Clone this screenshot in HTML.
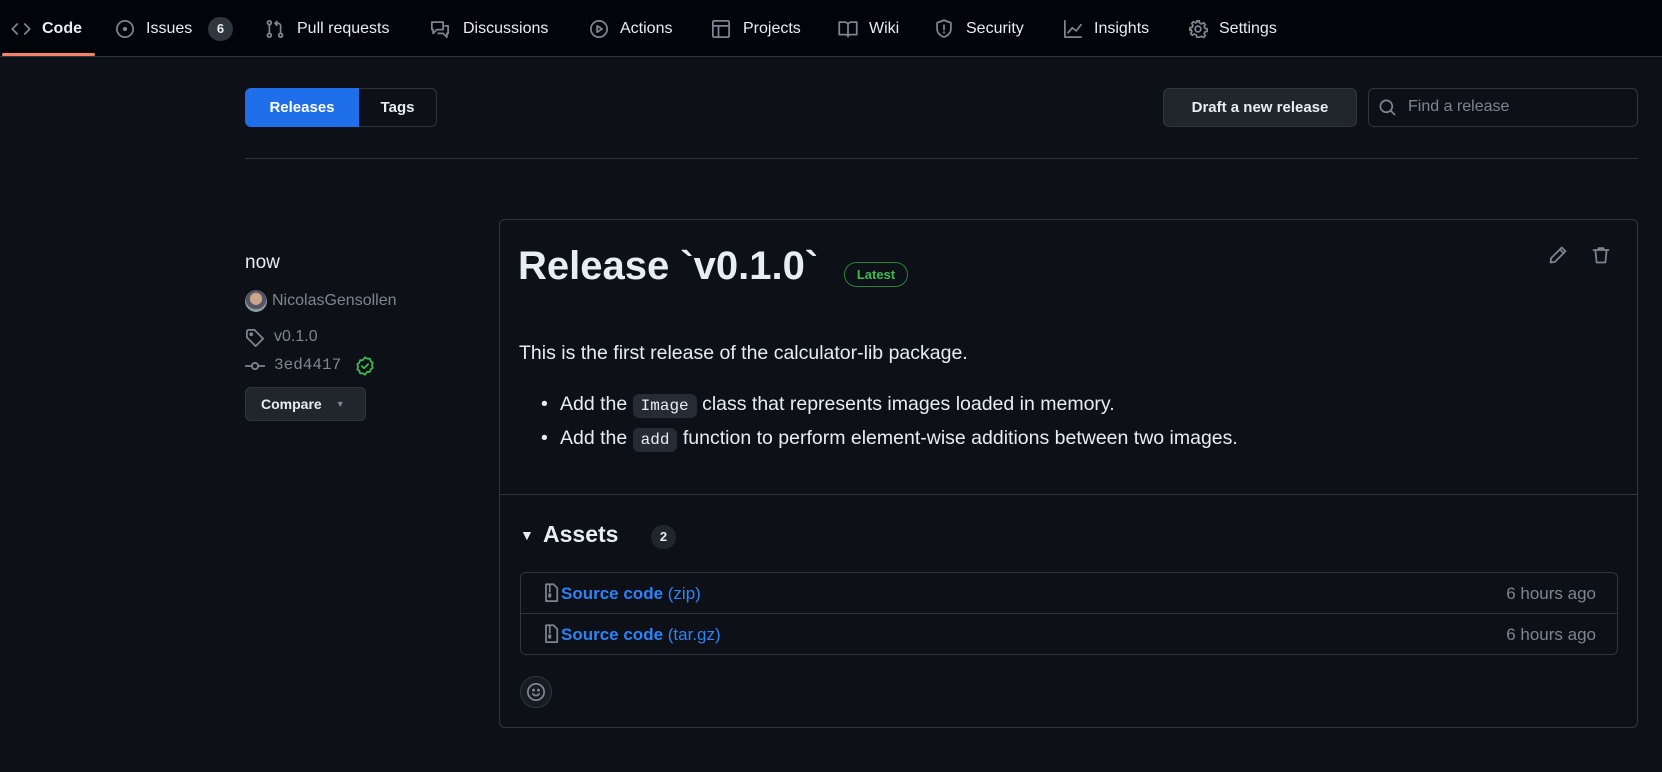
<!DOCTYPE html>
<html><head><meta charset="utf-8"><style>
*{box-sizing:border-box;margin:0;padding:0}
body{width:1662px;height:772px;background:#0d1117;color:#e6edf3;font-family:"Liberation Sans",sans-serif;position:relative;overflow:hidden}
.a{position:absolute}
.nav{left:0;top:0;width:1662px;height:57px;background:#010409;border-bottom:1px solid #30363d}
.ni{position:absolute;top:19px;font-size:16px;line-height:20px;color:#e6edf3;white-space:nowrap}
.ic{position:absolute;top:19px}
svg{fill:none;stroke:#7d8590;stroke-width:1.4;stroke-linecap:round;stroke-linejoin:round}
.btn{border:1px solid #30363d;border-radius:6px;background:#21262d;font-weight:bold;font-size:15px;display:flex;align-items:center;justify-content:center}
.m{color:#7d8590}
code{font-family:"Liberation Mono",monospace;font-size:16px;background:#262c36;border-radius:6px;padding:3px 8px}
.lnk{color:#2f81f7;font-size:17px;font-weight:bold}
.p{font-size:19.5px;white-space:nowrap}
</style></head><body>
<div class="a nav">
<div class="a" style="left:2px;top:53px;width:93px;height:3px;background:#f78166;border-radius:2px"></div>
<svg class="ic" style="left:11px" width="20" height="20" viewBox="0 0 16 16"><path d="M5 4L1 8l4 4M11 4l4 4-4 4"/></svg>
<div class="ni" style="left:42px;font-weight:bold">Code</div>
<svg class="ic" style="left:115px" width="20" height="20" viewBox="0 0 16 16"><circle cx="8" cy="8" r="6.5"/><circle cx="8" cy="8" r="1" fill="#7d8590"/></svg>
<div class="ni" style="left:146px">Issues</div>
<div class="a" style="left:208px;top:17px;width:25px;height:24px;border-radius:12px;background:#30363d;font-size:13px;font-weight:bold;text-align:center;line-height:24px">6</div>
<svg class="ic" style="left:265px" width="20" height="20" viewBox="0 0 16 16"><circle cx="3.5" cy="3" r="1.5"/><circle cx="3.5" cy="13" r="1.5"/><circle cx="12.5" cy="13" r="1.5"/><path d="M3.5 4.5v7M12.5 11.5V5.5a2 2 0 0 0-2-2H8M9.5 2L8 3.5 9.5 5"/></svg>
<div class="ni" style="left:297px">Pull requests</div>
<svg class="ic" style="left:430px" width="20" height="20" viewBox="0 0 16 16"><path d="M1.5 2.5h9v6h-5l-3 3v-3h-1zM12 5.5h2.5v6h-1v3l-3-3h-4"/></svg>
<div class="ni" style="left:463px">Discussions</div>
<svg class="ic" style="left:589px" width="20" height="20" viewBox="0 0 16 16"><circle cx="8" cy="8" r="6.5"/><path d="M6.5 5.5v5l4-2.5z"/></svg>
<div class="ni" style="left:620px">Actions</div>
<svg class="ic" style="left:711px" width="20" height="20" viewBox="0 0 16 16"><rect x="1.5" y="1.5" width="13" height="13" rx="1"/><path d="M1.5 5.5h13M6 5.5v9"/></svg>
<div class="ni" style="left:743px">Projects</div>
<svg class="ic" style="left:837px" width="22" height="20" viewBox="0 0 16 16"><path d="M1 2.5h4.5A2.5 2.5 0 0 1 8 5v9a2 2 0 0 0-2-1.5H1zM15 2.5h-4.5A2.5 2.5 0 0 0 8 5v9a2 2 0 0 1 2-1.5h5z"/></svg>
<div class="ni" style="left:869px">Wiki</div>
<svg class="ic" style="left:934px" width="20" height="20" viewBox="0 0 16 16"><path d="M8 1l5.5 2v5c0 3.5-3 5.5-5.5 6.5C5.5 13.5 2.5 11.5 2.5 8V3zM8 5v3.5M8 10.5v.5"/></svg>
<div class="ni" style="left:966px">Security</div>
<svg class="ic" style="left:1063px" width="20" height="20" viewBox="0 0 16 16"><path d="M1.5 1.5v13h13M4 11l3.5-4 3 2.5 4-5"/></svg>
<div class="ni" style="left:1094px">Insights</div>
<svg class="ic" style="left:1188px" width="20" height="20" viewBox="0 0 16 16"><circle cx="8" cy="8" r="2.3"/><path d="M7 1.5h2l.4 1.8 1.5.7 1.6-1 1.4 1.4-1 1.6.7 1.5 1.8.4v2l-1.8.4-.7 1.5 1 1.6-1.4 1.4-1.6-1-1.5.7L9 14.5H7l-.4-1.8-1.5-.7-1.6 1-1.4-1.4 1-1.6-.7-1.5L1.5 9V7l1.8-.4.7-1.5-1-1.6 1.4-1.4 1.6 1 1.5-.7z"/></svg>
<div class="ni" style="left:1219px">Settings</div>
</div>

<div class="a" style="left:245px;top:88px;width:114px;height:39px;background:#1f6feb;border-radius:6px 0 0 6px;font-weight:bold;font-size:15px;line-height:39px;text-align:center;color:#fff">Releases</div>
<div class="a" style="left:359px;top:88px;width:78px;height:39px;border:1px solid #30363d;border-left:none;border-radius:0 6px 6px 0;font-weight:bold;font-size:15px;line-height:37px;text-align:center">Tags</div>
<div class="a btn" style="left:1163px;top:88px;width:194px;height:39px">Draft a new release</div>
<div class="a" style="left:1368px;top:88px;width:270px;height:39px;border:1px solid #30363d;border-radius:6px;background:#0d1117"></div>
<svg class="a" style="left:1378px;top:98px" width="19" height="19" viewBox="0 0 16 16"><circle cx="7" cy="7" r="5"/><path d="M10.5 10.5L14 14"/></svg>
<div class="a m" style="left:1408px;top:98px;font-size:16px">Find a release</div>
<div class="a" style="left:245px;top:158px;width:1393px;height:1px;background:#30363d"></div>

<div class="a" style="left:245px;top:252px;font-size:19px">now</div>
<div class="a" style="left:245px;top:290px;width:22px;height:22px;border-radius:50%;background:radial-gradient(circle at 50% 40%,#c9a58a 0 35%,#556 36% 60%,#8a9aa0 61%)"></div>
<div class="a m" style="left:272px;top:292px;font-size:16px">NicolasGensollen</div>
<svg class="a" style="left:245px;top:328px" width="20" height="20" viewBox="0 0 16 16"><path d="M1.5 2.5v5l7 7 6-6-7-7h-5z"/><circle cx="5" cy="5" r=".8"/></svg>
<div class="a m" style="left:274px;top:328px;font-size:16px">v0.1.0</div>
<svg class="a" style="left:245px;top:356px" width="20" height="20" viewBox="0 0 16 16"><circle cx="8" cy="8" r="2.5"/><path d="M0.5 8h5M10.5 8h5"/></svg>
<div class="a m" style="left:274px;top:356px;font-size:16px;font-family:'Liberation Mono',monospace">3ed4417</div>
<svg class="a" style="left:355px;top:356px;stroke:#3fb950" width="20" height="20" viewBox="0 0 16 16"><path d="M8 1l1.8 1.2 2.1-.1.6 2 1.7 1.3-.7 2 .7 2-1.7 1.3-.6 2-2.1-.1L8 15l-1.8-1.2-2.1.1-.6-2-1.7-1.3.7-2-.7-2 1.7-1.3.6-2 2.1.1z"/><path d="M5.5 8l1.8 1.8 3.2-3.3"/></svg>
<div class="a btn" style="left:245px;top:387px;width:121px;height:34px;font-size:14px;justify-content:flex-start;padding-left:15px">Compare<span style="margin-left:14px;color:#7d8590;font-size:9px">▼</span></div>

<div class="a" style="left:499px;top:219px;width:1139px;height:509px;border:1px solid #30363d;border-radius:6px"></div>
<div class="a" style="left:518px;top:244px;font-size:40px;font-weight:bold">Release `v0.1.0`</div>
<div class="a" style="left:844px;top:262px;width:64px;height:25px;border:1px solid #238636;border-radius:13px;color:#3fb950;font-size:13px;font-weight:bold;text-align:center;line-height:23px">Latest</div>
<svg class="a" style="left:1548px;top:245px" width="20" height="20" viewBox="0 0 16 16"><path d="M11 2l3 3-8.5 8.5L2 14l.5-3.5zM9.5 3.5l3 3"/></svg>
<svg class="a" style="left:1591px;top:245px" width="20" height="20" viewBox="0 0 16 16"><path d="M2 4h12M6 4V2.5h4V4M3.5 4l1 10h7l1-10"/></svg>
<div class="a p" style="left:519px;top:342px">This is the first release of the calculator-lib package.</div>
<div class="a p" style="left:541px;top:393px">•</div>
<div class="a p" style="left:560px;top:393px">Add the <code>Image</code> class that represents images loaded in memory.</div>
<div class="a p" style="left:541px;top:427px">•</div>
<div class="a p" style="left:560px;top:427px">Add the <code>add</code> function to perform element-wise additions between two images.</div>
<div class="a" style="left:500px;top:494px;width:1137px;height:1px;background:#30363d"></div>
<div class="a" style="left:520px;top:527px;font-size:14px">▼</div>
<div class="a" style="left:543px;top:521px;font-size:23px;font-weight:bold">Assets</div>
<div class="a" style="left:651px;top:525px;width:25px;height:24px;border-radius:12px;background:#21262d;font-size:13px;font-weight:bold;text-align:center;line-height:24px">2</div>
<div class="a" style="left:520px;top:572px;width:1098px;height:83px;border:1px solid #30363d;border-radius:6px"></div>
<div class="a" style="left:521px;top:613px;width:1096px;height:1px;background:#30363d"></div>
<svg class="a" style="left:542px;top:583px" width="18" height="20" viewBox="0 0 14 16"><path d="M3 1h6l3 3v10.5H3zM6 2v1M6 4v1M6 6v1M5.5 9h1v2h-1z"/></svg>
<div class="a lnk" style="left:561px;top:584px">Source code <span style="font-weight:normal">(zip)</span></div>
<div class="a m" style="right:66px;top:584px;font-size:17px">6 hours ago</div>
<svg class="a" style="left:542px;top:624px" width="18" height="20" viewBox="0 0 14 16"><path d="M3 1h6l3 3v10.5H3zM6 2v1M6 4v1M6 6v1M5.5 9h1v2h-1z"/></svg>
<div class="a lnk" style="left:561px;top:625px">Source code <span style="font-weight:normal">(tar.gz)</span></div>
<div class="a m" style="right:66px;top:625px;font-size:17px">6 hours ago</div>
<div class="a" style="left:520px;top:676px;width:32px;height:32px;border-radius:50%;border:1px solid #30363d;background:#161b22"></div>
<svg class="a" style="left:526px;top:682px" width="20" height="20" viewBox="0 0 16 16"><circle cx="8" cy="8" r="6.5"/><path d="M5.5 9.5a3 3 0 0 0 5 0"/><circle cx="6" cy="6.5" r=".5"/><circle cx="10" cy="6.5" r=".5"/></svg>
</body></html>
